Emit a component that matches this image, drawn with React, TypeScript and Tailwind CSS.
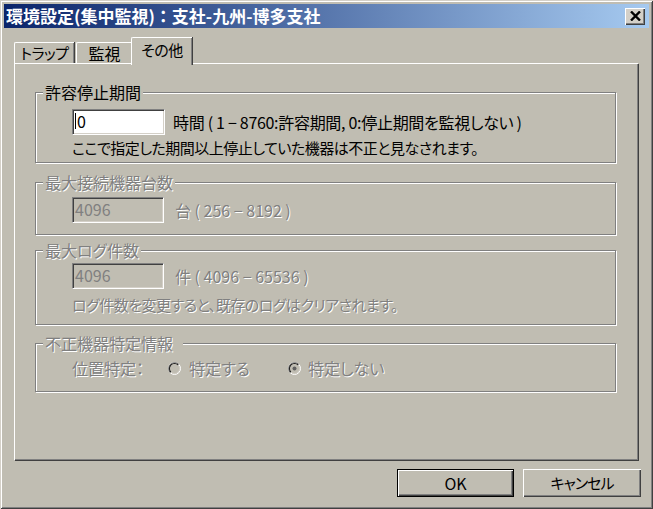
import React from "react";

const fontBase = "font-['Noto_Sans_CJK_JP','Noto_Sans_CJK_SC',sans-serif]";
const palt = "[font-feature-settings:'palt']";
const dis = "text-[#808080] [text-shadow:1px_1px_0_#ffffff]";
const BG = "bg-[#c0bdb2]";
const narrow = "text-[15px] leading-[18px] tracking-[-0.5px]";

function Radio({ checked }: { checked?: boolean }) {
  return (
    <svg width="13" height="13" viewBox="0 0 13 13" className="shrink-0">
      <circle cx="6.5" cy="6.5" r="6" fill="none" stroke="#ffffff" />
      <path d="M2.26 10.74 A6 6 0 0 1 10.74 2.26" fill="none" stroke="#707070" />
      <circle cx="6.5" cy="6.5" r="5" fill="none" stroke="#d4d0c8" />
      <path d="M2.96 10.04 A5 5 0 0 1 10.04 2.96" fill="none" stroke="#202020" strokeWidth="1.2" />
      <circle cx="6.5" cy="6.5" r="4.3" fill="#c0bdb2" />
      {checked && <circle cx="6.5" cy="6.5" r="2" fill="#606060" />}
    </svg>
  );
}

function Group({
  label,
  disabled,
  className,
  labelPad,
  children,
}: {
  label: string;
  disabled?: boolean;
  className: string;
  labelPad?: string;
  children: React.ReactNode;
}) {
  return (
    <div
      className={`relative w-[581px] border border-[#808080] shadow-[inset_1px_1px_0_#ffffff,1px_1px_0_#ffffff] ${className}`}
    >
      <div
        className={`absolute left-[7px] top-[-10px] pl-[2px] ${labelPad ?? "pr-[2px]"} ${BG} text-[16px] leading-[18px] ${
          disabled ? dis : "text-black"
        }`}
      >
        {label}
      </div>
      {children}
    </div>
  );
}

function SunkenInput({ value, disabled, w }: { value: string; disabled?: boolean; w: string }) {
  return (
    <div
      className={`${w} h-[26px] border-t border-l border-[#808080] border-b-white border-r-white border-b border-r shadow-[inset_1px_1px_0_#404040,inset_-1px_-1px_0_#d4d0c8] ${
        disabled ? `${BG} text-[#808080]` : "bg-white text-black"
      } flex items-start pl-[2px] pt-[2px] text-[16px] leading-[18px] shrink-0`}
    >
      {!disabled && <span className="w-px h-[16px] bg-black mr-[1px] mt-[1px]" />}
      <span>{value}</span>
    </div>
  );
}

export default function App() {
  return (
    <div
      className={`${fontBase} ${palt} w-[653px] h-[509px] ${BG} p-[4px] flex flex-col shadow-[inset_1px_1px_0_#d4d0c8,inset_-1px_-1px_0_#404040,inset_2px_2px_0_#ffffff,inset_-2px_-2px_0_#808080] overflow-hidden`}
    >
      {/* Title bar */}
      <div className="h-[24px] flex items-center justify-between bg-[linear-gradient(90deg,#0a246a_0%,#a6caf0_100%)] shrink-0">
        <div className="pl-[2px] text-white font-bold text-[17px] leading-[20px] whitespace-nowrap [font-feature-settings:normal]">
          環境設定(集中監視)：支社-九州-博多支社
        </div>
        <div className="mr-[4px] w-[20px] h-[17px] bg-[#d4d0c8] shadow-[inset_1px_1px_0_#ffffff,inset_-1px_-1px_0_#404040,inset_-2px_-2px_0_#808080] flex items-center justify-center">
          <svg width="11" height="10" viewBox="0 0 11 10">
            <path d="M1 0.5 L10 9.5 M10 0.5 L1 9.5" stroke="#000" strokeWidth="2.4" />
          </svg>
        </div>
      </div>

      {/* Tabs */}
      <div className="ml-[10px] mt-[9px] h-[26px] flex items-end relative z-10">
        <div className={`w-[60px] h-[21px] border-l border-t border-white rounded-tl-[2px] shadow-[inset_-1px_0_0_#808080,1px_0_0_#404040] flex items-center justify-center ${narrow} text-black`}>
          トラップ
        </div>
        <div className="ml-[2px] w-[56px] h-[21px] border-l border-t border-white rounded-tl-[2px] shadow-[inset_-1px_0_0_#808080,1px_0_0_#404040] flex items-center justify-center text-[16px] leading-[18px] text-black">
          監視
        </div>
        <div
          className={`ml-[-1px] w-[61px] h-[28px] mb-[-2px] ${BG} border-l border-t border-white rounded-tl-[2px] shadow-[inset_-1px_0_0_#808080,1px_0_0_#404040] flex items-start justify-center pt-[3px] ${narrow} text-black`}
        >
          その他
        </div>
      </div>

      {/* Panel */}
      <div className="ml-[10px] w-[624px] h-[397px] border-l border-t border-white shadow-[inset_-1px_-1px_0_#808080,1px_1px_0_#404040] flex flex-col pl-[20px] shrink-0">
        <Group label="許容停止期間" className="mt-[28px] h-[71px]">
          <div className="flex flex-col pl-[36px] pt-[16px]">
            <div className="flex items-center">
              <SunkenInput value="0" w="w-[93px]" />
              <span className="ml-[8px] text-[16px] leading-[18px] tracking-[-0.3px] text-black whitespace-nowrap">
                時間 ( 1 − 8760:許容期間, 0:停止期間を監視しない )
              </span>
            </div>
            <div className={`mt-[4px] ${narrow} text-black whitespace-nowrap`}>
              ここで指定した期間以上停止していた機器は不正と見なされます。
            </div>
          </div>
        </Group>

        <Group label="最大接続機器台数" disabled className="mt-[19px] h-[53px]">
          <div className="flex items-center pl-[36px] pt-[14px]">
            <SunkenInput value="4096" disabled w="w-[92px]" />
            <span className={`ml-[11px] text-[16px] leading-[18px] ${dis} whitespace-nowrap`}>
              台 ( 256 − 8192 )
            </span>
          </div>
        </Group>

        <Group label="最大ログ件数" disabled className="mt-[15px] h-[75px]">
          <div className="flex flex-col pl-[36px] pt-[12px]">
            <div className="flex items-center">
              <SunkenInput value="4096" disabled w="w-[92px]" />
              <span className={`ml-[11px] text-[16px] leading-[18px] ${dis} whitespace-nowrap`}>
                件 ( 4096 − 65536 )
              </span>
            </div>
            <div className={`mt-[7px] ${narrow} ${dis} whitespace-nowrap`}>
              ログ件数を変更すると、既存のログはクリアされます。
            </div>
          </div>
        </Group>

        <Group label="不正機器特定情報" disabled labelPad="pr-[10px]" className="mt-[18px] h-[49px]">
          <div className={`flex items-center pl-[36px] pt-[15px] text-[16px] leading-[18px] ${dis} whitespace-nowrap`}>
            <span className="w-[96px]">位置特定：</span>
            <span className="w-[120px] flex items-center">
              <Radio />
              <span className="ml-[8px]">特定する</span>
            </span>
            <span className="flex items-center">
              <Radio checked />
              <span className="ml-[7px]">特定しない</span>
            </span>
          </div>
        </Group>
      </div>

      {/* Buttons */}
      <div className="mt-[9px] flex justify-end pr-[8px]">
        <div className="w-[117px] h-[28px] border border-black shadow-[inset_1px_1px_0_#ffffff,inset_-1px_-1px_0_#404040,inset_-2px_-2px_0_#808080] flex items-center justify-center text-[16px] leading-[18px] text-black">
          OK
        </div>
        <div className={`ml-[9px] w-[118px] h-[28px] shadow-[inset_1px_1px_0_#ffffff,inset_-1px_-1px_0_#404040,inset_-2px_-2px_0_#808080] flex items-center justify-center text-[15px] leading-[18px] tracking-[-1px] text-black`}>
          キャンセル
        </div>
      </div>
    </div>
  );
}
